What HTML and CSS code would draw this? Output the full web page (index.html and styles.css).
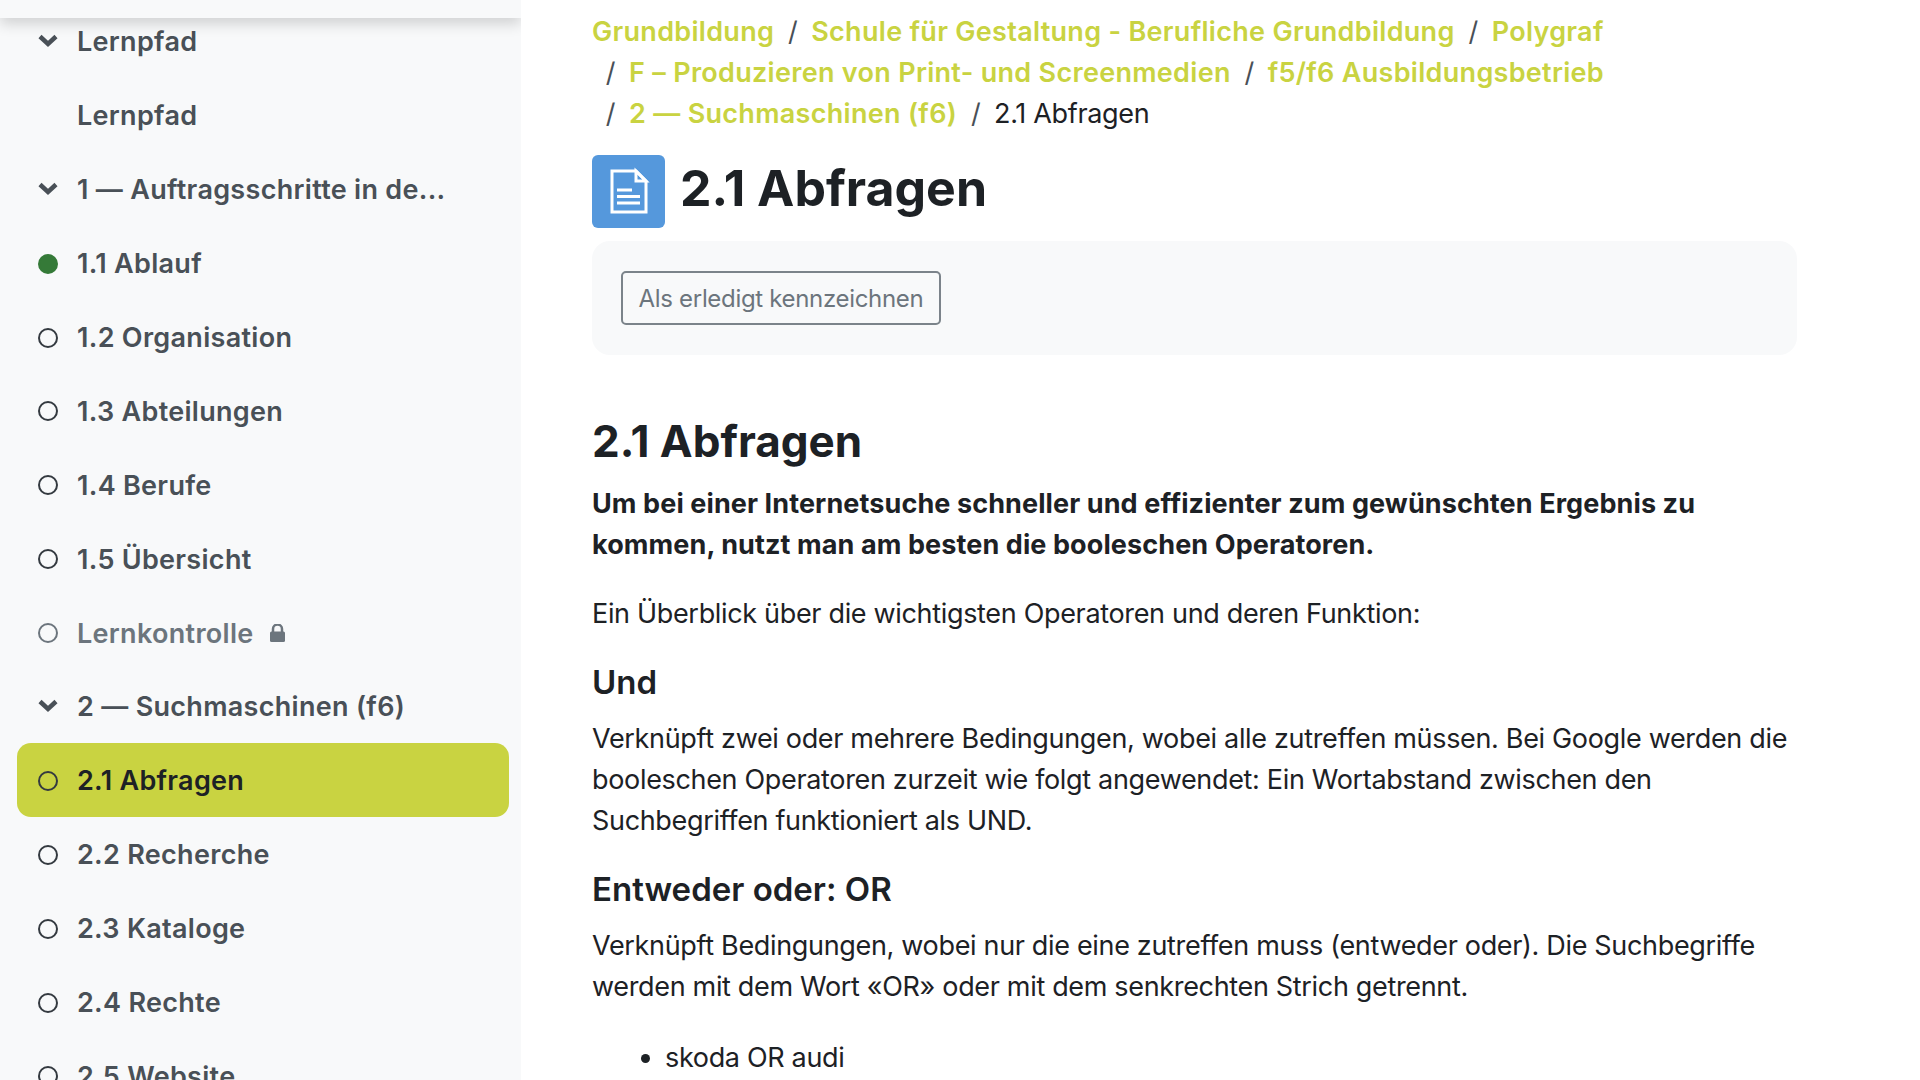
FILE: index.html
```html
<!DOCTYPE html>
<html lang="de">
<head>
    <meta charset="UTF-8">
    <title>2.1 Abfragen</title>
    <link rel="stylesheet" href="styles.css">
</head>
<body>

    <!-- Course index -->
    <aside class="sidebar">
        <div class="sidebar-top"></div>
        <ul class="course-index">
            <li class="item"><svg class="mark" viewBox="0 0 20 20"><path d="M2 4.500l8 7.500 8-7.500" class="chevron"/></svg>Lernpfad</li>
            <li class="item"><span class="mark"></span>Lernpfad</li>
            <li class="item"><svg class="mark" viewBox="0 0 20 20"><path d="M2 4.500l8 7.500 8-7.500" class="chevron"/></svg>1 — Auftragsschritte in de...</li>
            <li class="item"><span class="mark dot done"></span>1.1 Ablauf</li>
            <li class="item"><span class="mark dot"></span>1.2 Organisation</li>
            <li class="item"><span class="mark dot"></span>1.3 Abteilungen</li>
            <li class="item"><span class="mark dot"></span>1.4 Berufe</li>
            <li class="item"><span class="mark dot"></span>1.5 Übersicht</li>
            <li class="item locked"><span class="mark dot"></span>Lernkontrolle
                <svg class="lock" viewBox="0 0 15 18"><path d="M3 8V5a4.500 4.500 0 0 1 9 0v3" class="shackle"/><rect x="0" y="7.500" width="15" height="10.500" rx="1.500"/></svg>
            </li>
            <li class="item"><svg class="mark" viewBox="0 0 20 20"><path d="M2 4.500l8 7.500 8-7.500" class="chevron"/></svg>2 — Suchmaschinen (f6)</li>
            <li class="item active"><span class="mark dot"></span>2.1 Abfragen</li>
            <li class="item"><span class="mark dot"></span>2.2 Recherche</li>
            <li class="item"><span class="mark dot"></span>2.3 Kataloge</li>
            <li class="item"><span class="mark dot"></span>2.4 Rechte</li>
            <li class="item"><span class="mark dot"></span>2.5 Website</li>
        </ul>
    </aside>

    <!-- Page content -->
    <main class="content">
        <nav class="breadcrumb">
            <div class="crumb"><a href="#">Grundbildung</a></div>
            <div class="crumb"><span class="sep">/</span><a href="#">Schule für Gestaltung - Berufliche Grundbildung</a></div>
            <div class="crumb"><span class="sep">/</span><a href="#">Polygraf</a></div>
            <div class="crumb"><span class="sep">/</span><a href="#">F – Produzieren von Print- und Screenmedien</a></div>
            <div class="crumb"><span class="sep">/</span><a href="#">f5/f6 Ausbildungsbetrieb</a></div>
            <div class="crumb"><span class="sep">/</span><a href="#">2 — Suchmaschinen (f6)</a></div>
            <div class="crumb"><span class="sep">/</span><span>2.1 Abfragen</span></div>
        </nav>

        <header class="page-title">
            <div class="title-icon">
                <svg viewBox="0 0 73 73" width="73" height="73">
                    <path d="M20 16h24l10 10v31H20z" class="page-outline"/>
                    <path d="M44 16v10h10z" class="page-fold"/>
                    <path d="M25 35h15M25 41.500h23M25 48h23" class="page-lines"/>
                </svg>
            </div>
            <h1>2.1 Abfragen</h1>
        </header>

        <div class="activity-box">
            <button class="done-button">Als erledigt kennzeichnen</button>
        </div>

        <h2>2.1 Abfragen</h2>
        <p class="lead">Um bei einer Internetsuche schneller und effizienter zum gewünschten Ergebnis zu kommen, nutzt man am besten die booleschen Operatoren.</p>
        <p>Ein Überblick über die wichtigsten Operatoren und deren Funktion:</p>

        <h3>Und</h3>
        <p>Verknüpft zwei oder mehrere Bedingungen, wobei alle zutreffen müssen. Bei Google werden die booleschen Operatoren zurzeit wie folgt angewendet: Ein Wortabstand zwischen den Suchbegriffen funktioniert als UND.</p>

        <h3>Entweder oder: OR</h3>
        <p>Verknüpft Bedingungen, wobei nur die eine zutreffen muss (entweder oder). Die Suchbegriffe werden mit dem Wort «OR» oder mit dem senkrechten Strich getrennt.</p>
        <ul class="examples">
            <li>skoda OR audi</li>
        </ul>
    </main>

</body>
</html>
```

FILE: styles.css
```css
html, body {
    height: 100%;
}
body {
    margin: 0;
    display: flex;
    height: 1080px;
    overflow: hidden;
    background-color: #fff;
    color: #1d2125;
    font-family: Inter, "Liberation Sans", sans-serif;
    font-size: 27px;
    line-height: 41px;
    letter-spacing: -0.33px;
}

/* sidebar */
.sidebar {
    position: relative;
    flex: 0 0 521px;
    height: 1080px;
    overflow: hidden;
    background-color: #f8f9fa;
}
.sidebar-top {
    position: absolute;
    top: 0;
    left: 0;
    width: 100%;
    height: 18px;
    background-color: #f8f9fa;
    box-shadow: 0 6px 14px rgba(0, 0, 0, 0.16);
}
.course-index {
    list-style: none;
    margin: 0;
    padding: 4px 12px 0 17px;
}
.item {
    display: flex;
    align-items: center;
    box-sizing: border-box;
    height: 73.900px;
    padding: 2px 0 0 21px;
    border-radius: 14px;
    color: #495057;
    font-weight: 600;
    letter-spacing: 0.3px;
}
.item.active {
    background-color: #c9d341;
    color: #1d2125;
}
.item.locked {
    color: #6c757d;
}
.mark {
    flex: 0 0 20px;
    width: 20px;
    height: 20px;
    margin-right: 19px;
    box-sizing: border-box;
}
.chevron {
    fill: none;
    stroke: #495057;
    stroke-width: 4.500;
}
.dot {
    border: 2px solid #343a40;
    border-radius: 50%;
}
.dot.done {
    border-color: #357a38;
    background-color: #357a38;
}
.locked .dot {
    border-color: #6c757d;
}
.lock {
    width: 15px;
    height: 18px;
    margin-left: 16px;
    fill: #6c757d;
}
.shackle {
    fill: none;
    stroke: #6c757d;
    stroke-width: 2.500;
}

/* main column */
.content {
    width: 1205px;
    padding: 11px 0 0 71px;
}
.breadcrumb {
    display: flex;
    flex-wrap: wrap;
}
.breadcrumb a {
    color: #c9d341;
    font-weight: 600;
    letter-spacing: 0.3px;
    text-decoration: none;
}
.sep {
    display: inline-block;
    width: 37px;
    color: #495057;
    text-align: center;
}
.page-title {
    display: flex;
    align-items: center;
    gap: 15px;
    margin-top: 21px;
}
.page-title h1 {
    margin: 0 0 8px;
    font-size: 50px;
    line-height: 60px;
    font-weight: 700;
    letter-spacing: 0;
}
.title-icon {
    width: 73px;
    height: 73px;
    border-radius: 6px;
    background-color: #5598dc;
}
.page-outline, .page-fold, .page-lines {
    fill: none;
    stroke: #fff;
    stroke-width: 3;
}
.activity-box {
    margin-top: 13px;
    padding: 30px 29px;
    border-radius: 18px;
    background-color: #f8f9fa;
}
.done-button {
    display: block;
    width: 320px;
    height: 54px;
    padding: 0;
    border: 2px solid #7b838a;
    border-radius: 5px;
    background: none;
    color: #6c757d;
    font-family: inherit;
    font-size: 24px;
    letter-spacing: -0.32px;
}
h2 {
    margin: 59px 0 0;
    font-size: 44px;
    line-height: 54px;
    font-weight: 700;
    letter-spacing: 0;
}
h3 {
    margin: 0 0 15px;
    font-size: 33px;
    line-height: 41px;
    font-weight: 600;
    letter-spacing: 0;
}
p {
    margin: 0 0 28px;
}
.lead {
    margin: 15px 0 28px;
    font-weight: 700;
    letter-spacing: 0.1px;
}
.examples {
    margin: 30px 0 0;
    padding-left: 73px;
}
```
